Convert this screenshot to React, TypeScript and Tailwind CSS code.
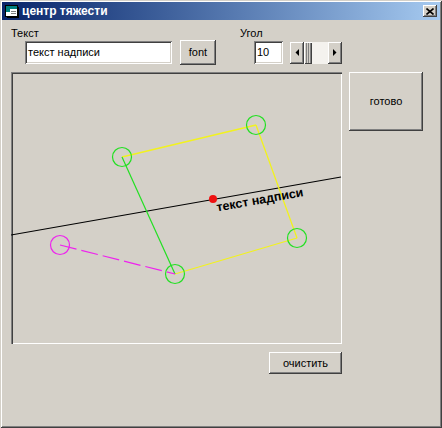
const raised =
  "shadow-[inset_-1px_-1px_0_#404040,inset_1px_1px_0_#ffffff,inset_-2px_-2px_0_#808080,inset_2px_2px_0_#d4d0c8]";
const sunken =
  "shadow-[inset_1px_1px_0_#808080,inset_-1px_-1px_0_#ffffff,inset_2px_2px_0_#404040,inset_-2px_-2px_0_#d4d0c8]";

function TitleIcon() {
  return (
    <svg width="14" height="13" viewBox="0 0 14 13" className="block">
      <rect x="0.5" y="0.5" width="12" height="11" fill="#ffffff" stroke="#000" />
      <rect x="1" y="1" width="11" height="3" fill="#008080" />
      <rect x="1" y="4" width="4" height="3" fill="#008080" />
      <rect x="13" y="2" width="1" height="11" fill="#000" />
      <rect x="2" y="12" width="12" height="1" fill="#000" />
      <rect x="6" y="6" width="5" height="1" fill="#808080" />
      <rect x="6" y="8" width="5" height="1" fill="#808080" />
    </svg>
  );
}

function Arrow({ dir }: { dir: "left" | "right" }) {
  return (
    <svg width="4" height="7" viewBox="0 0 4 7" className="block">
      {dir === "left" ? (
        <polygon points="4,0 4,7 0.5,3.5" fill="#000" />
      ) : (
        <polygon points="0,0 0,7 3.5,3.5" fill="#000" />
      )}
    </svg>
  );
}

export default function App() {
  const A = [122, 157];
  const B = [256, 125];
  const C = [297, 238];
  const D = [175, 274];
  const M = [60, 245];
  const green = "#22e022";
  const yellow = "#f2f21e";
  const magenta = "#ee22ee";
  return (
    <div className="w-[442px] h-[428px] bg-[#d4d0c8] p-[2px] flex flex-col shadow-[inset_1px_1px_0_#d4d0c8,inset_-1px_-1px_0_#404040,inset_2px_2px_0_#ffffff,inset_-2px_-2px_0_#808080] font-['Liberation_Sans',Arial,sans-serif] text-[11px] leading-[13px] text-black">
      {/* Title bar */}
      <div className="h-[18px] flex items-center bg-gradient-to-r from-[#0a246a] to-[#a6caf0] pl-[3px] pr-[3px]">
        <TitleIcon />
        <span className="ml-[3px] text-white font-bold text-[12px] leading-[14px]">
          центр тяжести
        </span>
        <div className={`ml-auto w-[14px] h-[12px] bg-[#d4d0c8] flex items-center justify-center ${raised}`}>
          <svg width="8" height="7" viewBox="0 0 8 7" className="block">
            <path d="M0.5 0.5 L7.5 6.5 M7.5 0.5 L0.5 6.5" stroke="#000" strokeWidth="1.6" />
          </svg>
        </div>
      </div>

      {/* Body */}
      <div className="flex flex-col pl-[9px]">
        {/* labels */}
        <div className="flex h-[13px] mt-[7px]">
          <span className="w-[229px]">Текст</span>
          <span>Угол</span>
        </div>
        {/* controls */}
        <div className="flex items-center h-[25px]">
          <div className={`ml-[14px] w-[147px] h-[23px] bg-white flex items-center pl-[3px] ${sunken}`}>
            текст надписи
          </div>
          <div className={`ml-[8px] w-[36px] h-[25px] flex items-center justify-center ${raised}`}>
            font
          </div>
          <div className={`ml-[38px] w-[29px] h-[23px] bg-white flex items-center pl-[3px] ${sunken}`}>
            10
          </div>
          <div className="ml-[7px] w-[52px] h-[22px] flex">
            <div className={`w-[14px] h-full flex items-center justify-center ${raised}`}>
              <Arrow dir="left" />
            </div>
            <div className="w-[8px] h-full bg-[repeating-linear-gradient(90deg,#808080_0_1px,#d4d0c8_1px_2px)] shadow-[inset_1px_1px_0_#ffffff,inset_-1px_-1px_0_#404040]" />
            <div className="flex-1 h-full bg-[#f4f2ee]" />
            <div className={`w-[14px] h-full flex items-center justify-center ${raised}`}>
              <Arrow dir="right" />
            </div>
          </div>
        </div>
        {/* canvas + ready */}
        <div className="flex mt-[7px]">
          <div className="w-[331px] h-[272px] shadow-[inset_1px_1px_0_#808080,inset_2px_2px_0_#404040,inset_-1px_-1px_0_#ffffff,inset_-2px_-2px_0_#d4d0c8]">
            <svg width="331" height="272" viewBox="11 72 331 272" className="block">
              <line x1="11" y1="235" x2="341" y2="177" stroke="#000" strokeWidth="1.2" />
              <line x1={A[0]} y1={A[1]} x2={B[0]} y2={B[1]} stroke={yellow} strokeWidth="1.3" />
              <line x1={B[0]} y1={B[1]} x2={C[0]} y2={C[1]} stroke={yellow} strokeWidth="1.3" />
              <line x1={C[0]} y1={C[1]} x2={D[0]} y2={D[1]} stroke={yellow} strokeWidth="1.3" />
              <line x1={A[0]} y1={A[1]} x2={D[0]} y2={D[1]} stroke={green} strokeWidth="1.2" />
              <line
                x1={M[0]}
                y1={M[1]}
                x2={D[0]}
                y2={D[1]}
                stroke={magenta}
                strokeWidth="1.2"
                strokeDasharray="17 5"
              />
              {[A, B, C, D].map((p, i) => (
                <circle key={i} cx={p[0]} cy={p[1]} r="9.5" fill="none" stroke={green} strokeWidth="1.2" />
              ))}
              <circle cx={M[0]} cy={M[1]} r="9.5" fill="none" stroke={magenta} strokeWidth="1.2" />
              <circle cx="213" cy="199" r="4" fill="#ee1111" />
              <text
                x="215"
                y="212"
                transform="rotate(-10 213 199)"
                fontFamily="'Liberation Sans', Arial, sans-serif"
                fontWeight="bold"
                fontSize="12.5"
                fill="#000"
              >
                текст надписи
              </text>
            </svg>
          </div>
          <div className={`ml-[7px] w-[74px] h-[59px] flex items-center justify-center ${raised}`}>
            готово
          </div>
        </div>
        {/* bottom */}
        <div className="flex mt-[8px]">
          <div className={`ml-[258px] w-[73px] h-[22px] flex items-center justify-center ${raised}`}>
            очистить
          </div>
        </div>
      </div>
    </div>
  );
}
